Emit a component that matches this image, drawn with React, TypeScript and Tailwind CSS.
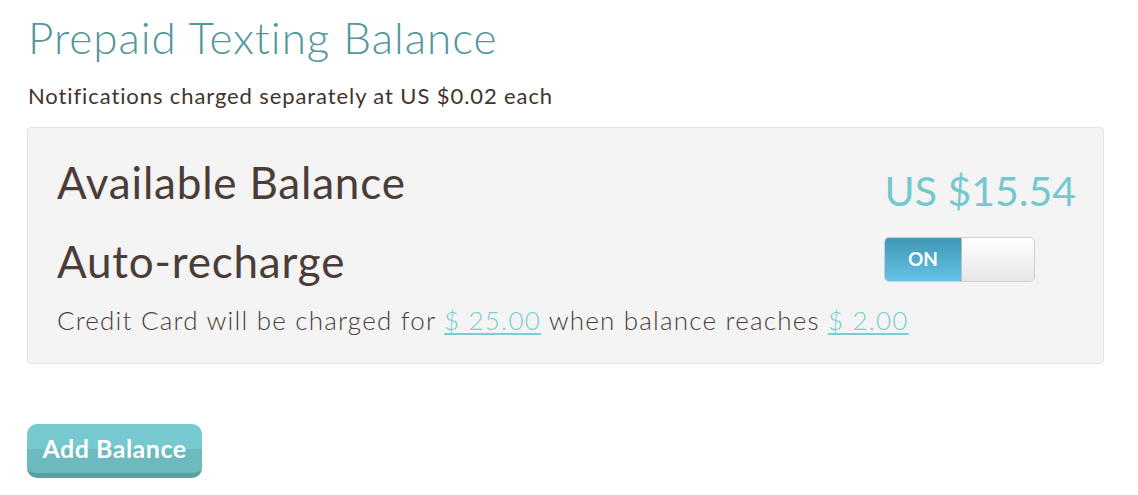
import React from "react";

const font = { fontFamily: "Lato, 'Open Sans', sans-serif" };

export default function App() {
  return (
    <div className="w-[1138px] h-[495px] bg-white pl-[27px] pr-[34px] pt-[9px]" style={font}>
      <h1 className="text-[44px] leading-[56px] font-light text-[#52979c] tracking-[1px] pl-px">
        Prepaid Texting Balance
      </h1>
      <p className="mt-[18px] text-[22px] leading-[26px] text-[#43332c] tracking-[0.9px] pl-px">
        Notifications charged separately at US $0.02 each
      </p>
      <div className="mt-[18px] h-[237px] rounded-[4px] border border-[#e3e3e3] bg-[#f4f4f4] pl-[29px] pr-[27px] pt-[26px]">
        <div className="flex items-start justify-between">
          <div className="text-[44px] leading-[56px] text-[#4a3d38] tracking-[0.8px]">Available Balance</div>
          <div className="pt-[9px] text-[41px] leading-[56px] text-[#74c9ce]">US $15.54</div>
        </div>
        <div className="mt-[14px] flex items-center justify-between">
          <div className="text-[44px] leading-[56px] text-[#4a3d38] tracking-[0.8px]">Auto-recharge</div>
          <div className="mr-[41px] -mt-[3px] flex h-[45px] w-[151px] overflow-hidden rounded-[5px] border border-[#cfcfcf]">
            <div className="flex w-[76px] items-center justify-center bg-gradient-to-b from-[#3f97b6] to-[#65c3e3] text-[19px] font-bold text-white">
              ON
            </div>
            <div className="flex-1 border-l border-[#bdbdbd] bg-gradient-to-b from-[#ffffff] to-[#e6e6e6]" />
          </div>
        </div>
        <p className="mt-[14px] text-[26px] leading-[34px] font-light text-[#4a3d38] tracking-[1.2px]">
          Credit Card will be charged for{" "}
          <a className="text-[#7bccd3] underline underline-offset-[3px]">$ 25.00</a> when balance reaches{" "}
          <a className="text-[#7bccd3] underline underline-offset-[3px]">$ 2.00</a>
        </p>
      </div>
      <button className="mt-[60px] h-[54px] w-[175px] rounded-[10px] border-b-[5px] border-[#5b9fa3] bg-gradient-to-b from-[#76cacf] from-50% to-[#6cbabe] to-50% text-[25px] font-bold text-white tracking-[0.5px]">
        Add Balance
      </button>
    </div>
  );
}
